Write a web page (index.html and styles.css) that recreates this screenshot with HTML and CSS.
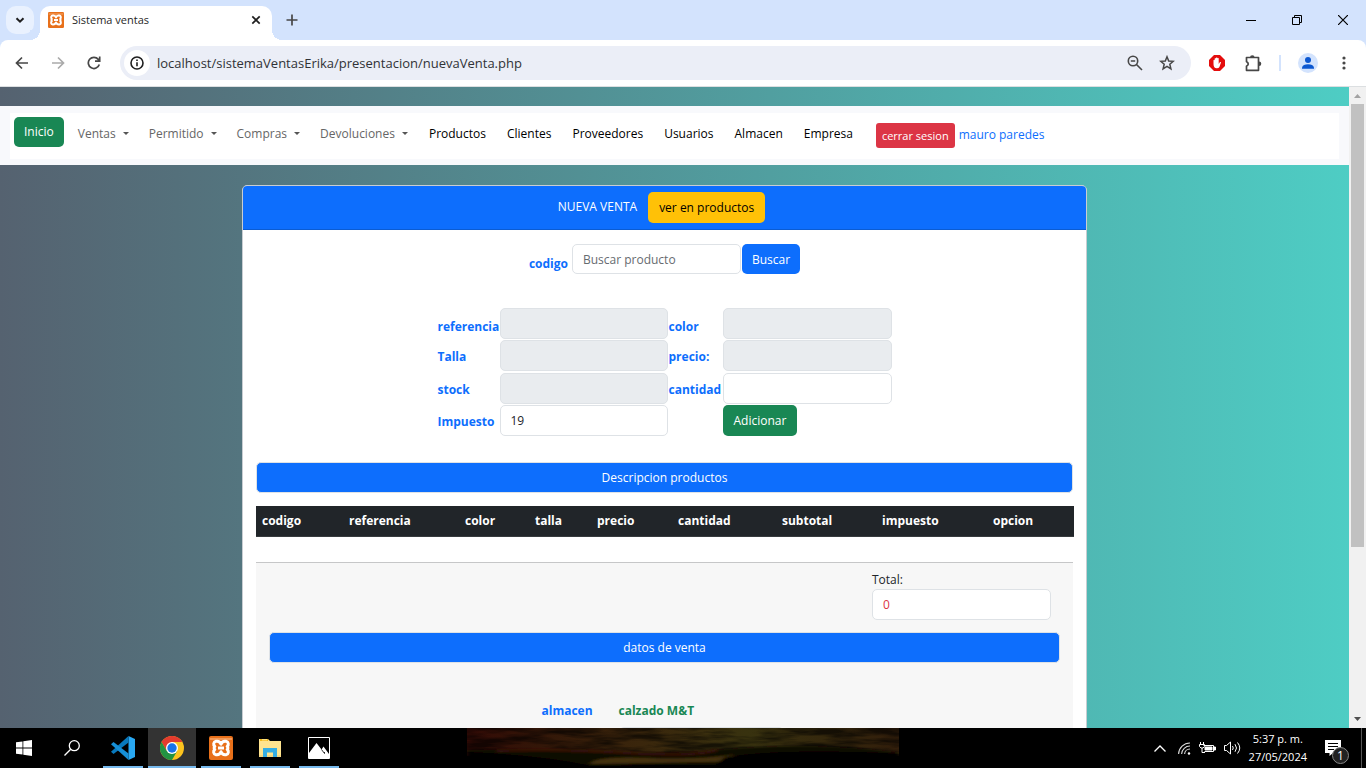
FILE: index.html
```html
<!DOCTYPE html>
<html lang="es">
<head>
<meta charset="utf-8">
<title>Sistema ventas</title>
<link rel="stylesheet" href="styles.css">
</head>
<body>
<svg class="defs" width="0" height="0" aria-hidden="true">
  <symbol id="xampp" viewBox="0 0 24 24">
    <rect width="24" height="24" rx="2" fill="#e8701a"/>
    <path d="M1 2h22v2H1z" fill="#f39a58"/>
    <path d="M12 8.2C11 5.6 8.800 4.900 7 5.300 4.400 5.900 4 8.800 5.800 10.400 4.900 11 4.900 12.900 5.800 13.500 3.900 15 4.300 18.200 7 18.700 8.900 19 11 18.300 12 15.700 13 18.300 15.100 19 17 18.700 19.700 18.200 20.100 15 18.200 13.500 19.100 12.900 19.100 11 18.200 10.400 20 8.800 19.600 5.900 17 5.300 15.200 4.900 13 5.600 12 8.200Z" fill="none" stroke="#fff" stroke-width="3" stroke-linejoin="round"/>
    <path d="M9 12h6" stroke="#fff" stroke-width="3"/>
  </symbol>
</svg>

<header class="tabs">
  <button class="tab-search" aria-label="Buscar pestañas"><svg width="12" height="12" viewBox="0 0 12 12"><path d="M2.500 4.200 6 7.700 9.500 4.200" fill="none" stroke="#1f1f1f" stroke-width="2"/></svg></button>
  <div class="tab">
    <svg width="16" height="16"><use href="#xampp"/></svg>
    <span class="tab-title">Sistema ventas</span>
    <button class="plain" aria-label="Cerrar pestaña"><svg width="10" height="10" viewBox="0 0 10 10"><path d="M1.300 1.300 8.700 8.700M8.700 1.300 1.300 8.700" stroke="#1f1f1f" stroke-width="1.700"/></svg></button>
  </div>
  <button class="plain new-tab" aria-label="Nueva pestaña"><svg width="12" height="12" viewBox="0 0 12 12"><path d="M6 .5v11M.5 6h11" stroke="#474747" stroke-width="1.700"/></svg></button>
  <div class="window-buttons">
    <button class="plain" aria-label="Minimizar"><svg width="10" height="10" viewBox="0 0 10 10"><path d="M0 5.500h10" stroke="#000"/></svg></button>
    <button class="plain" aria-label="Restaurar"><svg width="10" height="10" viewBox="0 0 10 10" fill="none" stroke="#000"><path d="M.5 2.500h7v7h-7zM2.500 2.500v-2h7v7h-2"/></svg></button>
    <button class="plain" aria-label="Cerrar"><svg width="10" height="10" viewBox="0 0 10 10"><path d="M0 0 10 10M10 0 0 10" stroke="#000" stroke-width="1.200"/></svg></button>
  </div>
</header>

<div class="toolbar-wrap">
<div class="toolbar">
  <button class="plain nav-btn" aria-label="Atrás"><svg width="14" height="14" viewBox="0 0 14 14" fill="none" stroke="#474747" stroke-width="1.700"><path d="M13 7H2M7 1.500 1.500 7 7 12.500"/></svg></button>
  <button class="plain nav-btn" aria-label="Adelante"><svg width="14" height="14" viewBox="0 0 14 14" fill="none" stroke="#aaa" stroke-width="1.700"><path d="M1 7h11M7 1.500 12.500 7 7 12.500"/></svg></button>
  <button class="plain nav-btn" aria-label="Recargar"><svg width="14" height="14" viewBox="0 0 14 14" fill="none" stroke="#474747" stroke-width="1.700"><path d="M12.300 8.500A5.600 5.600 0 1 1 11.300 3.400L12.500 5M12.700 .5V5.200H8"/></svg></button>
  <div class="omnibox">
    <span class="site-info"><svg width="14" height="14" viewBox="0 0 14 14"><circle cx="7" cy="7" r="6" fill="none" stroke="#1f1f1f" stroke-width="1.600"/><path d="M7 6.200v4M7 3.500v1.600" stroke="#1f1f1f" stroke-width="1.600"/></svg></span>
    <input class="url" aria-label="Dirección" value="localhost/sistemaVentasErika/presentacion/nuevaVenta.php">
    <button class="plain" aria-label="Zoom"><svg width="16" height="16" viewBox="0 0 16 16" fill="none" stroke="#474747" stroke-width="1.600"><circle cx="6" cy="6" r="4.700"/><path d="M9.500 9.500 15 15M3.800 6h4.400"/></svg></button>
    <button class="plain" aria-label="Favorito"><svg width="16" height="16" viewBox="0 0 16 16" fill="none" stroke="#474747" stroke-width="1.500"><path d="M8 1.800 9.700 6l4.600.3-3.500 3 1.100 4.500L8 11.400l-3.900 2.400 1.100-4.500-3.500-3L6.300 6z"/></svg></button>
  </div>
  <div class="extensions">
    <button class="plain" aria-label="AdBlock"><svg width="16" height="16" viewBox="0 0 16 16"><path d="M5 0h6l5 5v6l-5 5H5l-5-5V5z" fill="#e40d0d"/><path d="M4.500 9V5.200q.6-.8 1.200 0V8V3.400q.7-.8 1.300 0V7.500V2.800q.7-.8 1.400 0V7.500V3.300q.7-.8 1.300 0V9l1.300-1.900q1-.5 1 .4l-1.600 4.400q-.7 1.300-2.400 1.300Q4.500 13.400 4.500 9z" fill="#fff"/></svg></button>
    <button class="plain puzzle" aria-label="Extensiones"><svg width="17" height="17" viewBox="0 0 17 17"><path d="M1.500 2.500h12v12.800h-12v-4Q5 9 1.500 6.500z" fill="none" stroke="#474747" stroke-width="1.700" stroke-linejoin="round"/><path d="M5 2.500a2.300 2.300 0 0 1 4.600 0zM14 6.500a2.300 2.300 0 0 1 0 4.600z" fill="#474747"/></svg></button>
    <span class="separator"></span>
    <button class="plain" aria-label="Perfil"><svg width="20" height="20" viewBox="0 0 20 20"><circle cx="10" cy="10" r="10" fill="#d3e3fd"/><circle cx="10" cy="7" r="3" fill="#0b57d0"/><path d="M4 15.700v-1.300Q5 11.200 10 11.200t6 3.200v1.300z" fill="#0b57d0"/></svg></button>
    <button class="plain menu" aria-label="Menú"><svg width="4" height="14" viewBox="0 0 4 14" fill="#474747"><circle cx="2" cy="2" r="1.600"/><circle cx="2" cy="7" r="1.600"/><circle cx="2" cy="12" r="1.600"/></svg></button>
  </div>
</div>
</div>

<div class="viewport">
  <div class="page">
    <nav class="navbar">
      <div class="navbar-inner">
        <a class="btn btn-success" href="#">Inicio</a>
        <a class="drop" href="#">Ventas</a>
        <a class="drop" href="#">Permitido</a>
        <a class="drop" href="#">Compras</a>
        <a class="drop" href="#">Devoluciones</a>
        <a class="nav-link" href="#">Productos</a>
        <a class="nav-link" href="#">Clientes</a>
        <a class="nav-link" href="#">Proveedores</a>
        <a class="nav-link" href="#">Usuarios</a>
        <a class="nav-link" href="#">Almacen</a>
        <a class="nav-link" href="#">Empresa</a>
        <div class="session"><button class="btn-danger">cerrar sesion</button><span class="user">mauro paredes</span></div>
      </div>
    </nav>

    <main class="card">
      <div class="card-header"><span>NUEVA VENTA</span><a class="btn btn-warning" href="#">ver en productos</a></div>
      <div class="card-body">
        <form class="search">
          <label for="codigo">codigo</label>
          <input class="control" id="codigo" placeholder="Buscar producto">
          <button type="button" class="btn btn-primary">Buscar</button>
        </form>
        <form class="fields">
          <label class="first" for="referencia">referencia</label><input class="control" id="referencia" disabled>
          <label class="first" for="color">color</label><input class="control" id="color" disabled>
          <label for="talla">Talla</label><input class="control" id="talla" disabled>
          <label for="precio">precio:</label><input class="control" id="precio" disabled>
          <label for="stock">stock</label><input class="control" id="stock" disabled>
          <label for="cantidad">cantidad</label><input class="control" id="cantidad">
          <label for="impuesto">Impuesto</label><input class="control" id="impuesto" value="19">
          <button type="button" class="btn btn-success add">Adicionar</button>
        </form>
        <h2 class="bar">Descripcion productos</h2>
        <table class="products">
          <colgroup><col class="c-codigo"><col class="c-referencia"><col class="c-color"><col class="c-talla"><col class="c-precio"><col class="c-cantidad"><col class="c-subtotal"><col class="c-impuesto"><col class="c-opcion"></colgroup>
          <thead><tr><th>codigo</th><th>referencia</th><th>color</th><th>talla</th><th>precio</th><th>cantidad</th><th>subtotal</th><th>impuesto</th><th>opcion</th></tr></thead>
        </table>
        <section class="summary">
          <div class="total"><label for="total">Total:</label><input class="control" id="total" value="0"></div>
          <h2 class="bar">datos de venta</h2>
          <div class="store">
            <span class="store-label">almacen</span>
            <span class="store-name">calzado M&amp;T</span>
            <input class="control store-input" aria-label="almacen">
          </div>
        </section>
      </div>
    </main>
  </div>
  <div class="scrollbar">
    <svg width="7" height="4" viewBox="0 0 7 4"><path d="M0 4 3.500 0 7 4z" fill="#a3a3a3"/></svg>
    <div class="track"><div class="thumb"></div></div>
    <svg width="7" height="4" viewBox="0 0 7 4"><path d="M0 0 3.500 4 7 0z" fill="#505050"/></svg>
  </div>
</div>

<footer class="taskbar">
  <div class="system">
    <button class="app" aria-label="Inicio de Windows"><svg width="16" height="16" viewBox="0 0 16 16" fill="#fff"><path d="M0 2.300 6.500 1.400V7.600H0zM7.300 1.300 16 0V7.600H7.300zM0 8.400H6.500V14.600L0 13.700zM7.300 8.400H16V16L7.300 14.700z"/></svg></button>
    <button class="app" aria-label="Buscar"><svg width="16" height="16" viewBox="0 0 16 16" fill="none" stroke="#fff" stroke-width="1.300"><circle cx="10.300" cy="5.700" r="5"/><path d="M6.700 9.300.5 15.500"/></svg></button>
  </div>
  <div class="apps">
    <button class="app open" aria-label="Visual Studio Code"><svg width="24" height="24" viewBox="0 0 24 24"><path d="M17.500 0 24 3v18l-6.500 3z" fill="#29a8f2"/><path d="M17.500 0v6.500L2.500 18 0 15.700z" fill="#0879bd"/><path d="M0 8.300 2.500 6l15 11.500V24z" fill="#168fd6"/></svg></button>
    <button class="app open active" aria-label="Chrome"><svg width="24" height="24" viewBox="0 0 24 24"><circle cx="12" cy="12" r="12" fill="#fcc31e"/><path d="M1.600 6A12 12 0 0 1 22.400 6H12L6.800 15z" fill="#e33b2e"/><path d="M1.600 6A12 12 0 0 0 12 24l5.200-9H6.800z" fill="#229342"/><circle cx="12" cy="12" r="6" fill="#fff"/><circle cx="12" cy="12" r="4.700" fill="#1a73e8"/></svg></button>
    <button class="app open" aria-label="XAMPP"><svg width="24" height="24"><use href="#xampp"/></svg></button>
    <button class="app open" aria-label="Explorador"><svg width="22" height="20" viewBox="0 0 22 20"><path d="M0 1h9l2 2h11v16H0z" fill="#ffe48f"/><path d="M1 1h8v2H1z" fill="#f5b91c"/><path d="M3 1.300h5v1H3z" fill="#fff3ad"/><path d="M0 17h22v2H0z" fill="#f5d780"/><path d="M4 10h14v9h-4v-4.500H8V19H4z" fill="#35aee4"/></svg></button>
    <button class="app open" aria-label="Fotos"><svg width="22" height="22" viewBox="0 0 22 22"><path d="M.5.500h21v21H.5z" fill="#000" stroke="#fff"/><path d="M1 16 8.500 6l5 6.500L15.500 9.500 21 17v4H1z" fill="#fff"/><path d="m13.500 12.500 3 4v-1.500" fill="none" stroke="#000" stroke-width=".8"/></svg></button>
  </div>
  <svg class="sunset" viewBox="0 0 432 40" preserveAspectRatio="none" aria-hidden="true">
    <defs>
      <linearGradient id="sky" x2="1" y2="0"><stop offset="0" stop-color="#340b06"/><stop offset=".18" stop-color="#331708"/><stop offset=".4" stop-color="#3a260c"/><stop offset=".65" stop-color="#38320f"/><stop offset="1" stop-color="#321e0b"/></linearGradient>
      <filter id="soft" x="-10%" y="-50%" width="120%" height="200%"><feGaussianBlur stdDeviation="2 1"/></filter>
      <filter id="clouds" x="0" y="0" width="100%" height="100%"><feTurbulence type="fractalNoise" baseFrequency=".02 .13" numOctaves="4" seed="7"/><feColorMatrix values="0 0 0 0 0  0 0 0 0 0  0 0 0 0 0  3 0 0 0 -1.100"/></filter>
    </defs>
    <rect width="432" height="28" fill="url(#sky)"/>
    <rect width="432" height="28" filter="url(#clouds)" opacity=".6"/>
    <g filter="url(#soft)">
      <path d="M0 22Q60 20 120 24T260 21T432 24V44H0z" fill="#100904"/>
      <path d="M122 36Q130 28 180 30T265 27L285 33Q190 35 122 36z" fill="#44330d"/>
      <path d="M30 23Q90 21 160 25T250 22" fill="none" stroke="#3a1409" stroke-width="2"/>
      <path d="M258 29Q320 20 432 26V44H240z" fill="#020202"/>
      <path d="M0 24Q70 27 120 37H300V44H0z" fill="#020202"/>
    </g>
  </svg>
  <div class="tray">
    <svg class="chevron" width="12" height="7" viewBox="0 0 12 7"><path d="M.5 6.500 6 1l5.500 5.500" fill="none" stroke="#fff" stroke-width="1.300"/></svg>
    <svg width="13" height="13" viewBox="0 0 13 13" fill="none" stroke="#ddd" stroke-width="1.100"><path d="M.6 12A11.400 11.400 0 0 1 12 1M3.600 12A8.400 8.400 0 0 1 12 4M6.600 12A5.400 5.400 0 0 1 12 7"/><circle cx="11" cy="11.500" r="1.200" fill="#fff" stroke="none"/></svg>
    <svg width="17" height="12" viewBox="0 0 17 12" fill="none" stroke="#fff"><path d="M4.500 3.500h10v6h-9"/><path d="M6 5h7v3H6zM15 5h1.500v3H15z" fill="#fff"/><path d="M1.500 0v3M4.500 0v3M.5 2.500h5v2L4 6H2L.5 4.500zM3 6v4.500h3"/></svg>
    <svg width="17" height="14" viewBox="0 0 17 14" fill="none" stroke="#fff"><path d="M.5 4.500h2l4-3.500v12l-4-3.500h-2zM8.500 5q1.500 2 0 4M11 3.200q3 3.800 0 7.600M13.500 1.500q4.500 5.500 0 11"/></svg>
    <div class="clock"><span>5:37 p. m.</span><span>27/05/2024</span></div>
    <div class="notices"><svg width="16" height="16" viewBox="0 0 16 16"><path d="M0 0h16v13H8l-3.500 3v-3H0z" fill="#fff"/><path d="M3 3.500h10M3 6.500h10M3 9.500h6" stroke="#000"/></svg><span class="count">1</span></div>
    <span class="desktop-edge"></span>
  </div>
</footer>
</body>
</html>
```
FILE: styles.css
```css
* { box-sizing: border-box; }
body {
  margin: 0;
  height: 100vh;
  display: flex;
  flex-direction: column;
  overflow: hidden;
  background: #000;
  color: #212529;
  font: 12px/18px "Open Sans", "Noto Sans", sans-serif;
}
svg { display: block; flex: none; }
.defs { position: absolute; }
button, input { font: inherit; }
a { text-decoration: none; }
.plain { border: 0; padding: 0; background: none; }

/* Browser tab strip */
.tabs {
  flex: none;
  display: flex;
  align-items: center;
  height: 40px;
  padding-left: 6px;
  background: #d3e3fd;
}
.tab-search {
  display: grid;
  place-items: center;
  width: 28px;
  height: 28px;
  padding: 0;
  border: 0;
  border-radius: 10px;
  background: #e9f1fe;
}
.tab {
  position: relative;
  align-self: flex-end;
  display: flex;
  align-items: center;
  gap: 8px;
  width: 232px;
  height: 34px;
  margin-left: 6px;
  padding: 0 11px 6px 8px;
  border-radius: 10px 10px 0 0;
  background: #fff;
  color: #1f1f1f;
}
.tab::before, .tab::after {
  content: "";
  position: absolute;
  bottom: 0;
  width: 10px;
  height: 10px;
}
.tab::before { right: 100%; background: radial-gradient(circle at 0 0, #d3e3fd 10px, #fff 10px); }
.tab::after { left: 100%; background: radial-gradient(circle at 100% 0, #d3e3fd 10px, #fff 10px); }
.tab-title { flex: 1; font-size: 11px; }
.new-tab { margin-left: 14px; }
.window-buttons { display: flex; gap: 36px; margin-left: auto; padding-right: 18px; }

/* Browser toolbar */
.toolbar-wrap { flex: none; background: #d3e3fd; border-bottom: 1px solid #dcdfe1; }
.toolbar {
  display: flex;
  align-items: center;
  height: 46px;
  padding: 0 20px 0 15px;
  border-radius: 8px 8px 0 0;
  background: #fff;
}
.nav-btn { margin-right: 22px; }
.omnibox {
  flex: 1;
  display: flex;
  align-items: center;
  gap: 16px;
  height: 34px;
  margin-left: -3px;
  padding: 0 16px 0 4px;
  border-radius: 17px;
  background: #ebeef7;
}
.site-info {
  display: grid;
  place-items: center;
  width: 26px;
  height: 26px;
  border-radius: 13px;
  background: #fff;
}
.url {
  flex: 1;
  margin-left: -9px;
  padding: 0;
  border: 0;
  background: none;
  color: #303236;
  font-size: 13px;
}
.extensions { display: flex; align-items: center; gap: 17px; padding-left: 18px; }
.puzzle { margin-left: 3px; }
.separator { width: 2px; height: 16px; background: #d3e3fd; }
.menu { margin-left: 7px; }

/* Page area */
.viewport { flex: 1; min-height: 0; display: flex; background: #fff; }
.page {
  flex: 1;
  min-width: 0;
  overflow: hidden;
  padding-top: 19px;
  background: linear-gradient(90deg, #556270, #4ecdc4);
}
.scrollbar {
  width: 17px;
  display: flex;
  flex-direction: column;
  align-items: center;
  padding: 7px 0;
  background: #f1f1f1;
}
.track { flex: 1; align-self: stretch; padding: 6px 2px; }
.thumb { height: 73%; background: #c1c1c1; }

.navbar { padding: 7px 10px 6px; background: #f8f9fc; }
.navbar-inner {
  display: flex;
  align-items: flex-start;
  height: 46px;
  padding: 4px;
  background: #fff;
}
.btn {
  display: inline-block;
  padding: 5px 10px;
  border: 1px solid transparent;
  border-radius: 5px;
  line-height: 19px;
  color: #fff;
}
.btn-success { background: #198754; }
.btn-warning { background: #ffc107; color: #000; }
.btn-primary { background: #0d6efd; }
.navbar .btn { margin-right: 4px; padding: 5px 9px; line-height: 18px; }
.nav-link, .drop { padding: 8px 10px; line-height: 18px; color: #000; }
.nav-link { padding-left: 11px; }
.drop { color: #666; }
.drop::after {
  content: "";
  display: inline-block;
  margin-left: 7px;
  vertical-align: 3px;
  border: 3px solid transparent;
  border-top-color: #555;
  border-bottom: 0;
}
.session { display: flex; align-items: center; gap: 4px; padding: 6px 0 0 13px; }
.btn-danger {
  padding: 4px 6px;
  border: 0;
  border-radius: 3px;
  background: #dc3545;
  color: #fff;
  font-size: 11px;
  line-height: 17px;
}
.user { padding-bottom: 2px; color: #0d6efd; }

.card {
  width: 62.640%;
  margin: 20px auto 0 17.940%;
  border: 1px solid #c8cdd2;
  border-radius: 5px;
  background: #fff;
}
.card-header {
  display: flex;
  justify-content: center;
  gap: 11px;
  padding: 6px 18px 6px 12px;
  border-bottom: 1px solid #0b5cd2;
  border-radius: 4px 4px 0 0;
  background: #0d6efd;
  color: #fff;
}
.card-header span { padding-top: 6px; }
.card-body { padding: 14px 13px; }
.control {
  width: 169px;
  min-width: 0;
  height: 31px;
  padding: 5px 10px;
  border: 1px solid #dee2e6;
  border-radius: 5px;
  background: #fff;
  color: #212529;
}
.control::placeholder { color: #666b70; opacity: 1; }
.control:disabled { background: #e9ecef; }
.search { display: flex; justify-content: center; gap: 1px; }
.search label { width: 42px; padding-top: 11px; }
.search .btn, .search .control { height: 30px; padding: 0 10px; }
.search .btn { padding: 0 9px; }
.search label, .fields label { color: #0d6efd; font-weight: 700; }
.fields {
  display: grid;
  grid-template-columns: 61px 168px 53px 169px;
  grid-template-rows: 31px 32px 31px 31px;
  gap: 1px;
  justify-content: center;
  margin: 34px 0 26px;
}
.fields .control { width: 100%; }
.fields label { padding-top: 8px; }
.fields .first { padding-top: 10px; }
.add { grid-column: 4; justify-self: start; height: 31px; padding: 0 10px; }
.bar {
  margin: 0;
  padding: 5px;
  border: 1px solid #dee2e6;
  border-radius: 5px;
  background: #0d6efd;
  color: #fff;
  font-size: 12px;
  font-weight: 400;
  line-height: 19px;
  text-align: center;
}
.products {
  width: 100%;
  margin: 13px 0 25px;
  table-layout: fixed;
  border-collapse: collapse;
}
.products th {
  padding: 6px;
  border-bottom: 1px solid #373b3e;
  background: #212529;
  color: #fff;
  text-align: left;
}
.c-codigo { width: 87px; }
.c-referencia { width: 116px; }
.c-color { width: 70px; }
.c-talla { width: 62px; }
.c-precio { width: 81px; }
.c-cantidad { width: 104px; }
.c-subtotal { width: 100px; }
.c-impuesto { width: 111px; }
.c-opcion { width: 87px; }
.summary {
  padding: 8px 13px 20px;
  border-top: 1px solid #c6c7c8;
  background: #f7f7f7;
}
.total {
  display: flex;
  flex-direction: column;
  width: 179px;
  margin: 0 9px 12px auto;
}
.total .control { width: 100%; color: #dc3545; }
.store {
  display: grid;
  grid-template-columns: 77px 165px;
  row-gap: 7px;
  justify-content: center;
  padding: 39px 4px 0 0;
  font-weight: 700;
}
.store-label { color: #0d6efd; }
.store-name { color: #198754; }
.store-input { grid-column: 2; width: 100%; }

/* Windows taskbar */
.taskbar {
  flex: none;
  display: flex;
  height: 40px;
  background: #000;
}
.system { display: flex; margin-right: 3px; }
.apps { display: flex; gap: 1px; }
.app {
  display: grid;
  place-items: center;
  width: 48px;
  padding: 0;
  border: 0;
  background: linear-gradient(#76b9ed, #76b9ed) center bottom / 0 2px no-repeat;
}
.open { background-size: 40px 2px; }
.active { background-size: 48px 2px; background-color: #333; }
.sunset { width: 432px; height: 40px; margin-left: 124px; }
.tray { display: flex; align-items: center; gap: 8px; margin-left: auto; color: #fff; }
.chevron { margin-right: 4px; }
.clock {
  display: flex;
  flex-direction: column;
  align-items: center;
  font-size: 11px;
}
.notices { position: relative; margin: 0 12px 0 10px; }
.count {
  position: absolute;
  left: 7px;
  top: 7px;
  width: 17px;
  height: 17px;
  border: 1px solid #888;
  border-radius: 9px;
  background: #222;
  line-height: 15px;
  text-align: center;
}
.desktop-edge { width: 5px; height: 40px; border-left: 1px solid #555; }
```
